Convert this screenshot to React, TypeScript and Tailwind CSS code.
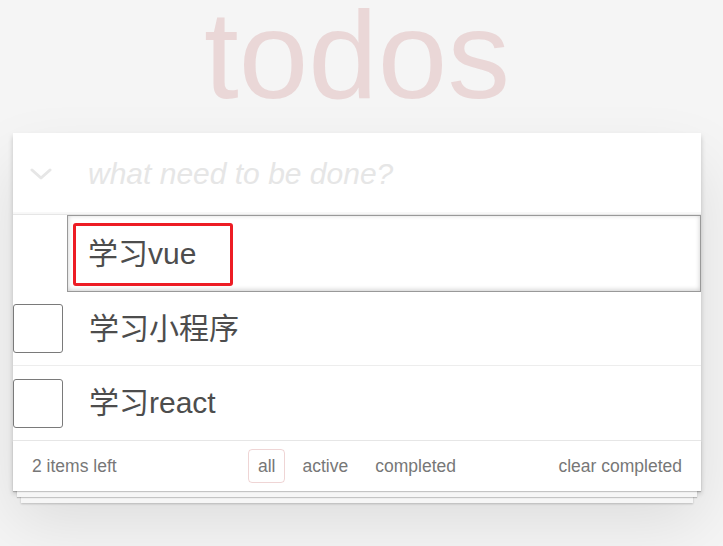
import React from "react";

const FONT = '"Liberation Sans", "Noto Sans CJK SC", sans-serif';

type Todo = { id: number; title: string; editing?: boolean };

const todos: Todo[] = [
  { id: 1, title: "学习vue", editing: true },
  { id: 2, title: "学习小程序" },
  { id: 3, title: "学习react" },
];

function TodoRow({ todo }: { todo: Todo }) {
  if (todo.editing) {
    return (
      <li className="flex">
        <div className="w-[54px] shrink-0" />
        <div className="relative flex h-[77px] flex-1 items-center border border-[#999] pl-[20px] text-[30px] leading-[42px] text-[#4d4d4d] shadow-[inset_0_-1px_5px_0_rgba(0,0,0,0.2)]">
          {todo.title}
          {/* annotation frame */}
          <div className="absolute left-[5px] top-[7px] h-[63px] w-[160px] rounded-[3px] border-[3px] border-[#ed1c24]" />
        </div>
      </li>
    );
  }
  return (
    <li className="flex h-[74px] items-center border-b border-[#ededed] last:h-[74px] last:border-b-0">
      <div className="h-[49px] w-[50px] shrink-0 rounded-[3px] border border-[#7a7a7a] bg-white" />
      <span className="ml-[26px] text-[30px] leading-[36px] text-[#4d4d4d]">{todo.title}</span>
    </li>
  );
}

export default function App() {
  return (
    <div className="min-h-screen bg-[#f5f5f5]" style={{ fontFamily: FONT }}>
      <div className="ml-[13px] w-[688px]">
        <h1 className="text-center text-[125px] font-thin leading-[110px] text-[rgba(175,47,47,0.15)]">
          todos
        </h1>

        <section className="relative mt-[23px] bg-white shadow-[0_2.5px_5px_0_rgba(0,0,0,0.2),0_31px_62px_0_rgba(0,0,0,0.1)]">
          {/* header */}
          <header className="flex h-[81px] items-center shadow-[inset_0_-2px_1px_rgba(0,0,0,0.03)]">
            <div className="w-[75px] shrink-0 pl-[17px]">
              <svg width="22" height="13" viewBox="0 0 22 13" className="mt-[2px]">
                <path d="M2 2 L11 10 L20 2" fill="none" stroke="#e6e6e6" strokeWidth="3" strokeLinecap="round" strokeLinejoin="round" />
              </svg>
            </div>
            <input
              className="h-[42px] flex-1 bg-transparent text-[30px] leading-[42px] text-[#4d4d4d] outline-none placeholder:italic placeholder:text-[#e6e6e6]"
              placeholder="what need to be done?"
            />
          </header>

          {/* list */}
          <ul className="border-t border-[#e6e6e6]">
            {todos.map((t) => (
              <TodoRow key={t.id} todo={t} />
            ))}
          </ul>

          {/* footer */}
          <footer className="relative flex h-[51px] items-center border-t border-[#e6e6e6] px-[19px] text-[17.5px] text-[#777]">
            <div className="absolute inset-0 shadow-[0_1px_1px_rgba(0,0,0,0.2),0_10px_0_-4px_#f6f6f6,0_11px_1px_-4px_rgba(0,0,0,0.2),0_20px_0_-8px_#f6f6f6,0_21px_2px_-8px_rgba(0,0,0,0.2)]" />
            <span className="relative">2 items left</span>
            <div className="absolute inset-x-0 top-0 flex h-full items-center justify-center">
              <a className="mx-[3.75px] rounded-[4px] border border-[rgba(175,47,47,0.2)] px-[8.75px] py-[3px]">all</a>
              <a className="mx-[3.75px] rounded-[4px] border border-transparent px-[8.75px] py-[3px]">active</a>
              <a className="mx-[3.75px] rounded-[4px] border border-transparent px-[8.75px] py-[3px]">completed</a>
            </div>
            <span className="relative ml-auto">clear completed</span>
          </footer>
        </section>
      </div>
    </div>
  );
}
